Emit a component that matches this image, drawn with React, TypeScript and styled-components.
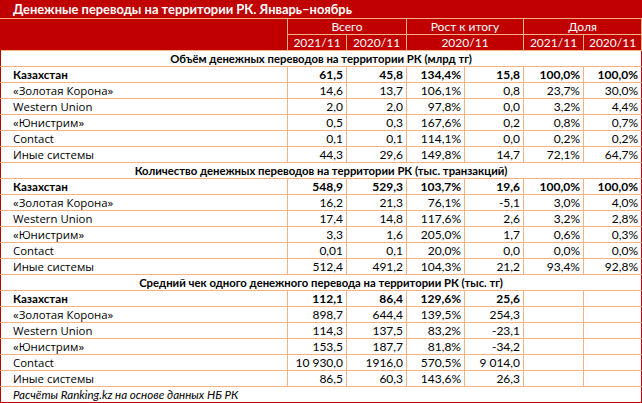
import React from "react";
import styled, { createGlobalStyle } from "styled-components";

const Global = createGlobalStyle`
  html, body { margin: 0; padding: 0; background: #ffffff; }
  body { font-family: "Lato", "Liberation Sans", sans-serif; }
`;

const RED = "#c00000";
const PEACH = "#f4b183";

const Table = styled.table`
  border-collapse: collapse;
  table-layout: fixed;
  width: 642px;
  font-family: "Lato", "Liberation Sans", sans-serif;
  font-size: 12px;
  color: #000;
  border: 1px solid ${RED};
`;

const TitleCell = styled.td`
  background: ${RED};
  color: #fff;
  font-weight: 700;
  font-size: 12.9px;
  text-align: left;
  padding: 0 0 0 12px;
  height: 17px;
  line-height: 17px;
  border-bottom: 1px solid ${PEACH};
  white-space: nowrap;
`;

const HeadCell = styled.td`
  background: ${RED};
  color: #fff;
  text-align: center;
  padding: 0;
  height: 15px;
  line-height: 15px;
  border: 1px solid ${PEACH};
  white-space: nowrap;
`;

const BlankHead = styled.td`
  background: ${RED};
  padding: 0;
  border-right: 1px solid ${PEACH};
  border-left: 1px solid ${RED};
`;

const SectionCell = styled.td`
  background: #fff;
  font-weight: 700;
  font-size: 11.3px;
  text-align: center;
  padding: 0;
  height: 15px;
  line-height: 15px;
  border: 1px solid ${PEACH};
  border-left: 1px solid ${RED};
  border-right: 1px solid ${RED};
  white-space: nowrap;
`;

const LabelCell = styled.td<{ $bold?: boolean }>`
  text-align: left;
  padding: 0 0 0 12px;
  height: 15px;
  line-height: 15px;
  font-family: ${(p) => (p.$bold ? `"Lato", sans-serif` : `"Open Sans", "Lato", sans-serif`)};
  font-size: ${(p) => (p.$bold ? "11.6px" : "11.4px")};
  font-weight: ${(p) => (p.$bold ? 700 : 400)};
  border: 1px solid ${PEACH};
  border-left: 1px solid ${RED};
  white-space: nowrap;
`;

const NumCell = styled.td<{ $bold?: boolean; $last?: boolean }>`
  text-align: right;
  padding: 0 3px 0 0;
  height: 15px;
  line-height: 15px;
  font-weight: ${(p) => (p.$bold ? 700 : 400)};
  border: 1px solid ${PEACH};
  border-right: 1px solid ${(p) => (p.$last ? RED : PEACH)};
  white-space: nowrap;
`;

const FootCell = styled.td`
  font-style: italic;
  font-size: 11.6px;
  text-align: left;
  padding: 0 0 0 12px;
  height: 15px;
  line-height: 15px;
  border: 1px solid ${RED};
  white-space: nowrap;
`;

type Row = [string, ...string[]];

const sections: { title: string; rows: Row[] }[] = [
  {
    title: "Объём денежных переводов на территории РК (млрд тг)",
    rows: [
      ["Казахстан", "61,5", "45,8", "134,4%", "15,8", "100,0%", "100,0%"],
      ["«Золотая Корона»", "14,6", "13,7", "106,1%", "0,8", "23,7%", "30,0%"],
      ["Western Union", "2,0", "2,0", "97,8%", "0,0", "3,2%", "4,4%"],
      ["«Юнистрим»", "0,5", "0,3", "167,6%", "0,2", "0,8%", "0,7%"],
      ["Contact", "0,1", "0,1", "114,1%", "0,0", "0,2%", "0,2%"],
      ["Иные системы", "44,3", "29,6", "149,8%", "14,7", "72,1%", "64,7%"],
    ],
  },
  {
    title: "Количество денежных переводов на территории РК (тыс. транзакций)",
    rows: [
      ["Казахстан", "548,9", "529,3", "103,7%", "19,6", "100,0%", "100,0%"],
      ["«Золотая Корона»", "16,2", "21,3", "76,1%", "-5,1", "3,0%", "4,0%"],
      ["Western Union", "17,4", "14,8", "117,6%", "2,6", "3,2%", "2,8%"],
      ["«Юнистрим»", "3,3", "1,6", "205,0%", "1,7", "0,6%", "0,3%"],
      ["Contact", "0,01", "0,1", "20,0%", "0,0", "0,0%", "0,0%"],
      ["Иные системы", "512,4", "491,2", "104,3%", "21,2", "93,4%", "92,8%"],
    ],
  },
  {
    title: "Средний чек одного денежного перевода на территории РК (тыс. тг)",
    rows: [
      ["Казахстан", "112,1", "86,4", "129,6%", "25,6", "", ""],
      ["«Золотая Корона»", "898,7", "644,4", "139,5%", "254,3", "", ""],
      ["Western Union", "114,3", "137,5", "83,2%", "-23,1", "", ""],
      ["«Юнистрим»", "153,5", "187,7", "81,8%", "-34,2", "", ""],
      ["Contact", "10 930,0", "1916,0", "570,5%", "9 014,0", "", ""],
      ["Иные системы", "86,5", "60,3", "143,6%", "26,3", "", ""],
    ],
  },
];

const widths = [287, 59, 60, 58, 59, 60, 58];

export default function App() {
  return (
    <>
      <Global />
      <Table>
        <colgroup>
          {widths.map((w, i) => (
            <col key={i} style={{ width: w }} />
          ))}
        </colgroup>
        <tbody>
          <tr>
            <TitleCell colSpan={7}>Денежные переводы на территории РК. Январь–ноябрь</TitleCell>
          </tr>
          <tr>
            <BlankHead rowSpan={2} />
            <HeadCell colSpan={2}>Всего</HeadCell>
            <HeadCell colSpan={2}>Рост к итогу</HeadCell>
            <HeadCell colSpan={2}>Доля</HeadCell>
          </tr>
          <tr>
            <HeadCell>2021/11</HeadCell>
            <HeadCell>2020/11</HeadCell>
            <HeadCell colSpan={2}>2020/11</HeadCell>
            <HeadCell>2021/11</HeadCell>
            <HeadCell>2020/11</HeadCell>
          </tr>
          {sections.map((s) => (
            <React.Fragment key={s.title}>
              <tr>
                <SectionCell colSpan={7}>{s.title}</SectionCell>
              </tr>
              {s.rows.map((r, ri) => {
                const bold = ri === 0;
                return (
                  <tr key={r[0]}>
                    <LabelCell $bold={bold}>{r[0]}</LabelCell>
                    {r.slice(1).map((v, ci) => (
                      <NumCell key={ci} $bold={bold} $last={ci === 5}>
                        {v}
                      </NumCell>
                    ))}
                  </tr>
                );
              })}
            </React.Fragment>
          ))}
          <tr>
            <FootCell colSpan={7}>Расчёты Ranking.kz на основе данных НБ РК</FootCell>
          </tr>
        </tbody>
      </Table>
    </>
  );
}
